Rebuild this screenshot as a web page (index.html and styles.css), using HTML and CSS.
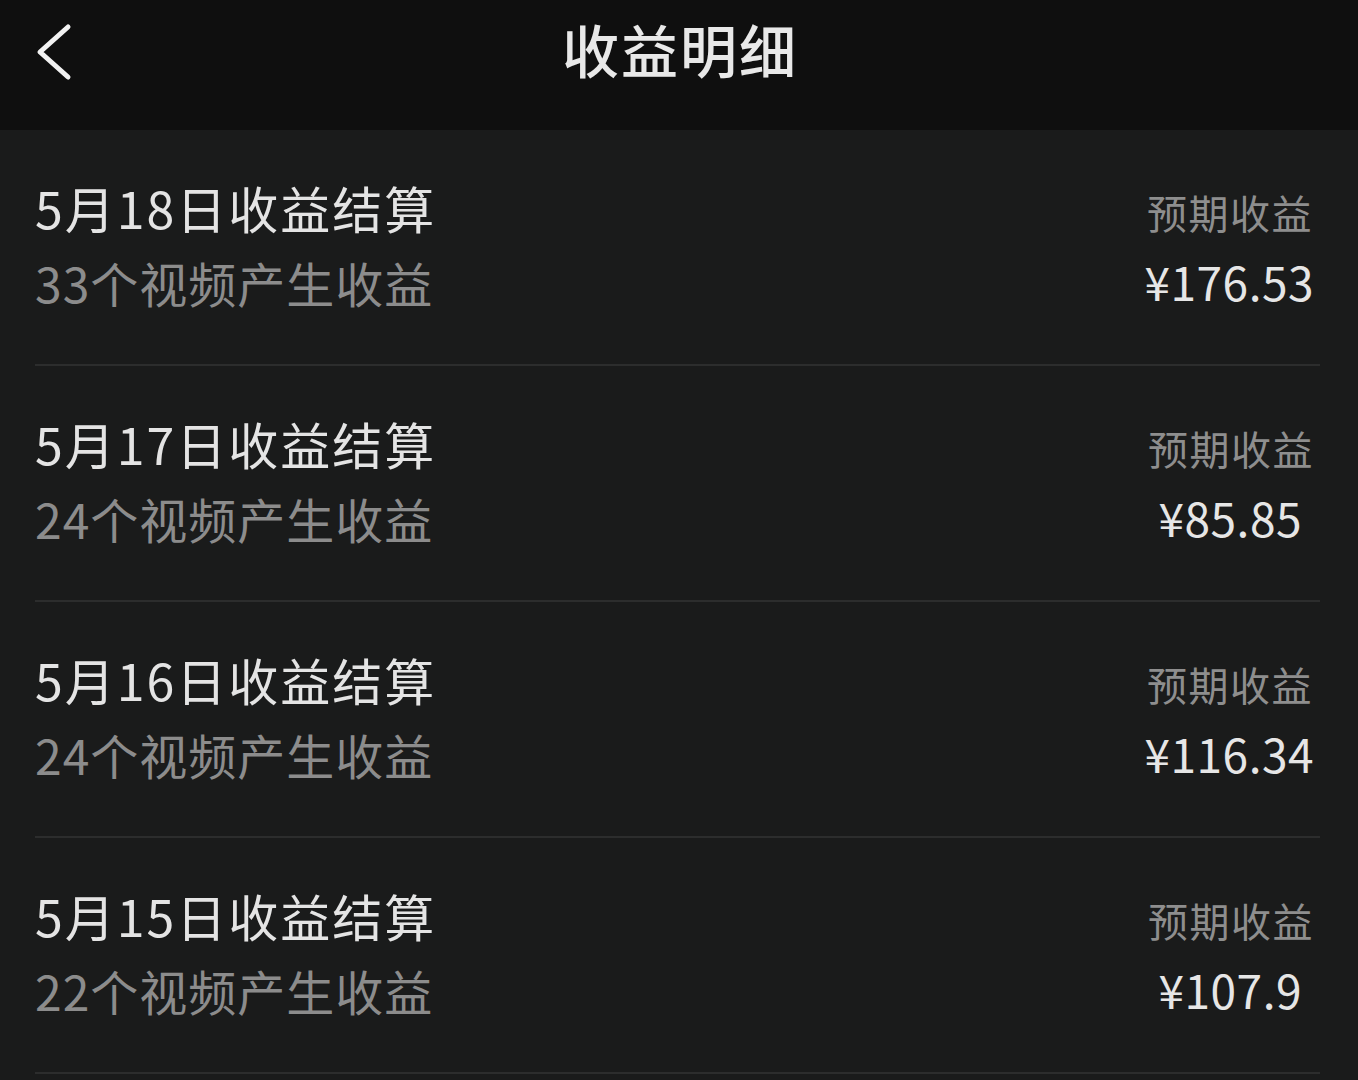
FILE: index.html
```html
<!DOCTYPE html>
<html lang="zh-CN">
<head>
<meta charset="utf-8">
<title>收益明细</title>
<link rel="stylesheet" href="styles.css">
</head>
<body>
<header class="topbar">
  <svg class="back" width="40" height="64" viewBox="0 0 40 64" aria-hidden="true">
    <polyline points="33,6 5,31 33,56" fill="none" stroke="#f2f2f2" stroke-width="5" stroke-linecap="round" stroke-linejoin="round"/>
  </svg>
  <h1 class="title">收益明细</h1>
</header>
<main class="list">
  <div class="row">
    <div class="info">
      <div class="date">5月18日收益结算</div>
      <div class="sub">33个视频产生收益</div>
    </div>
    <div class="money">
      <div class="label">预期收益</div>
      <div class="amount">¥176.53</div>
    </div>
  </div>
  <div class="row">
    <div class="info">
      <div class="date">5月17日收益结算</div>
      <div class="sub">24个视频产生收益</div>
    </div>
    <div class="money">
      <div class="label">预期收益</div>
      <div class="amount">¥85.85</div>
    </div>
  </div>
  <div class="row">
    <div class="info">
      <div class="date">5月16日收益结算</div>
      <div class="sub">24个视频产生收益</div>
    </div>
    <div class="money">
      <div class="label">预期收益</div>
      <div class="amount">¥116.34</div>
    </div>
  </div>
  <div class="row">
    <div class="info">
      <div class="date">5月15日收益结算</div>
      <div class="sub">22个视频产生收益</div>
    </div>
    <div class="money">
      <div class="label">预期收益</div>
      <div class="amount">¥107.9</div>
    </div>
  </div>
</main>
</body>
</html>
```
FILE: styles.css
```css
html, body {
  margin: 0;
  padding: 0;
  background: #1a1b1b;
  font-family: "Noto Sans CJK SC", "Noto Sans", sans-serif;
  overflow: hidden;
}

.topbar {
  height: 130px;
  background: #0f0f0f;
  display: flex;
  align-items: flex-start;
  justify-content: center;
  position: relative;
}

.back {
  position: absolute;
  left: 35px;
  top: 21px;
}

.title {
  margin: 12px 0 0 0;
  font-size: 57px;
  line-height: 72px;
  font-weight: 500;
  color: #e8e8e8;
  letter-spacing: 2px;
  padding-left: 2px;
}

.list {
  margin: 0 38px 0 35px;
}

.row {
  height: 234px;
  border-bottom: 2px solid #2c2d2d;
  display: flex;
  align-items: center;
  justify-content: space-between;
  padding-right: 6px;
}

.info {
  display: flex;
  flex-direction: column;
}

.date {
  font-size: 50px;
  line-height: 75px;
  color: #e4e4e4;
  font-weight: 400;
  letter-spacing: 2px;
  margin-top: -4px;
}

.sub {
  font-size: 48px;
  line-height: 75px;
  color: #8c8c8c;
  letter-spacing: 1px;
}

.money {
  display: flex;
  flex-direction: column;
  align-items: center;
}

.label {
  font-size: 40px;
  line-height: 69px;
  color: #8e8e8e;
  letter-spacing: 1.5px;
  padding-left: 1.5px;
}

.amount {
  font-size: 46px;
  line-height: 69px;
  color: #e6e6e6;
  font-weight: 400;
  letter-spacing: 0.5px;
}
```
